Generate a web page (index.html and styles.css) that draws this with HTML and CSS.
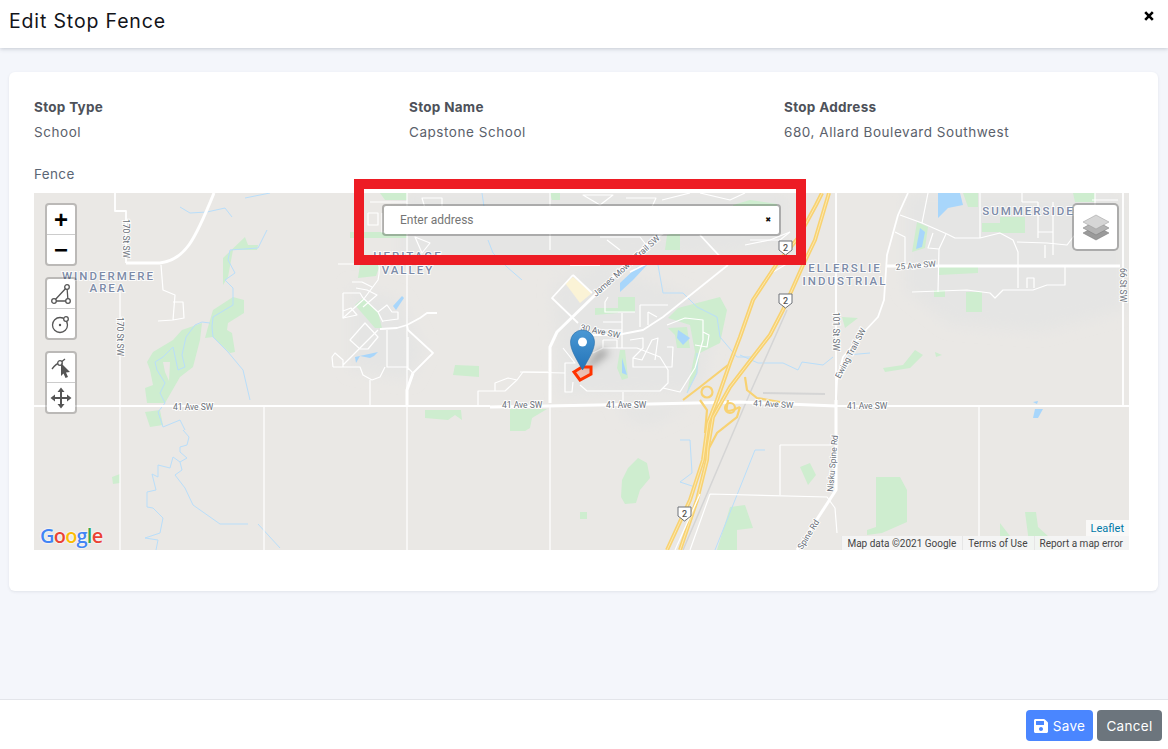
FILE: index.html
```html
<!DOCTYPE html>
<html lang="en">
<head>
<meta charset="utf-8">
<title>Edit Stop Fence</title>
<link rel="stylesheet" href="styles.css">
</head>
<body>
<div class="page">
  <header class="top">
    <h1 class="title">Edit Stop Fence</h1>
    <svg class="close" viewBox="0 0 10 10" width="10" height="10"><path d="M1.200 1.200 8.800 8.800M8.800 1.200 1.200 8.800"/></svg>
  </header>
  <main class="main">
    <section class="card">
      <div class="facts">
        <div><div class="label">Stop Type</div><div class="value">School</div></div>
        <div><div class="label">Stop Name</div><div class="value">Capstone School</div></div>
        <div><div class="label">Stop Address</div><div class="value">680, Allard Boulevard Southwest</div></div>
      </div>
      <div class="fence">Fence</div>
      <div class="map">
        <svg class="tiles" viewBox="34 193 1095 357" width="1095" height="357" xmlns="http://www.w3.org/2000/svg">
          <defs>
            <filter id="soft" x="-10%" y="-10%" width="120%" height="120%"><feGaussianBlur stdDeviation="7"/></filter>
            <filter id="softer" x="-50%" y="-50%" width="200%" height="200%"><feGaussianBlur stdDeviation="4"/></filter>
            <linearGradient id="pin" x1="0" y1="0" x2="0" y2="1"><stop offset="0" stop-color="#4a98d4"/><stop offset="1" stop-color="#2474b8"/></linearGradient>
            <path id="h1" d="M822 193 L816 205 798 238 776 265 753 300 740 337 730 363 717 400 708 423 703 460 690 500 667 550"/>
            <path id="h2" d="M829 193 L815 240 803 265 783 310 770 335 753 357 730 387 713 417 708 447 707 460 697 500 680 550"/>
          </defs>
          <rect class="land" x="34" y="193" width="1095" height="357"/>
          <!-- built-up areas -->
          <g filter="url(#soft)">
            <path class="urban" d="M552 285 L600 262 L700 300 L712 340 L700 392 L560 396 Z"/>
            <path class="urban" d="M400 193 H790 V250 L600 262 H400 Z"/>
            <path class="urban" d="M905 193 H1125 V310 L1040 332 L950 325 L905 290 Z"/>
            <path class="urban" d="M350 285 L400 300 L425 350 L410 380 L350 370 Z"/>
            <path class="urban" d="M615 405 H690 L655 424 H635 Z"/>
          </g>
          <!-- parks -->
          <path class="park" d="M147 362 153 352 173 340 182 330 202 323 200 340 193 367 180 377 165 403 147 403 145 388 153 385 150 370Z"/>
          <path class="land" d="M163 362 170 362 169 381 165 372Z"/>
          <path class="park" d="M213 310 233 297 244 300 244 313 228 323 227 330 232 333 235 352 230 353 213 337 205 338 208 327Z"/>
          <path class="park" d="M223 258 245 237 248 245 258 245 257 250 233 250 228 277 223 285Z"/>
          <path class="park" d="M145 412 160 410 163 425 150 427Z"/>
          <path class="park" d="M112 477 120 474 120 483 113 484Z"/>
          <path class="park" d="M355 305 363 298 378 312 382 328 375 328Z"/>
          <path class="park" d="M360 265 380 265 376 276 358 278Z"/>
          <path class="park" d="M453 375 455 365 479 366 479 377Z"/>
          <path class="park" d="M425 410 461 410 462 420 455 415 448 420 425 418Z"/>
          <path class="park" d="M510 409 547 409 532 418 530 428 525 431 510 431Z"/>
          <path class="park" d="M638 458 647 463 650 478 640 490 636 503 625 504 621 497 622 480 628 468Z"/>
          <rect class="park" x="580" y="512" width="7" height="7"/>
          <path class="park" d="M618 297 635 297 635 312 618 312Z"/>
          <path class="park" d="M595 308 618 308 618 313 595 315Z"/>
          <path class="park" d="M620 350 625 350 628 378 622 380 617 368Z"/>
          <path class="park" d="M678 308 720 297 727 310 720 343 700 353 697 372 687 393 695 352 690 325 668 318Z"/>
          <path class="park" d="M668 328 687 327 690 348 677 348 675 335Z"/>
          <path class="park" d="M842 317 858 318 845 328Z"/>
          <path class="park" d="M883 368 903 365 915 350 923 355 910 368 885 372Z"/>
          <path class="park" d="M935 352 942 355 936 357Z"/>
          <path class="park" d="M876 477 900 477 907 490 907 522 882 533 867 535 867 530 876 527Z"/>
          <path class="park" d="M730 507 745 505 753 528 737 530 737 550 717 550 727 517Z"/>
          <path class="park" d="M800 467 810 463 816 475 808 485Z"/>
          <path class="park" d="M1025 512 1036 512 1038 527 1049 537 1060 550 1030 550Z"/>
          <path class="park" d="M1000 523 1010 536 1012 550 1000 550Z"/>
          <path class="park" d="M917 222 928 227 925 248 912 252Z"/>
          <path class="park" d="M963 193 H978 V207 H968Z"/>
          <path class="park" d="M1000 217 H1025 V233 H1000Z"/>
          <path class="park" d="M982 223 H1000 V232 H982Z"/>
          <path class="park" d="M1073 193 H1095 V202 H1075Z"/>
          <path class="park" d="M939 267 H978 V273 L939 275Z"/>
          <path class="park" d="M934 290 H945 V297 H934Z"/>
          <path class="park" d="M966 292 H982 V312 H966Z"/>
          <path class="park" d="M380 193 H407 V200 H385Z"/>
          <path class="park" d="M350 232 H407 V238 H350Z"/>
          <path class="park" d="M733 205 L750 200 777 204 775 212 735 214Z"/>
          <path class="park" d="M667 235 680 232 680 250 665 250Z"/>
          <path class="park" d="M550 193 H560 V200 H552Z"/>
          <path class="school" d="M565 283 573 277 592 293 580 303Z"/>
          <!-- water -->
          <path class="lake" d="M938 193 H960 L963 205 948 208 938 218Z"/>
          <path class="lake" d="M920 228 925 232 922 247 916 249Z"/>
          <path class="lake" d="M393 306 402 296 404 298 396 310Z"/>
          <path class="lake" d="M355 357 378 352 374 356 370 358 360 356 356 363Z"/>
          <path class="lake" d="M622 358 627 375 622 373Z"/>
          <path class="lake" d="M678 330 690 338 683 345 677 338Z"/>
          <path class="lake" d="M620 283 637 267 647 265 633 280 620 292Z"/>
          <path class="lake" d="M1035 409 1043 409 1038 418 1033 418Z"/>
          <path class="lake" d="M1033 402 1038 401 1037 404Z"/>
          <path class="river" d="M183 430 189 437 187 445 180 447 180 452 187 458 180 462 173 457 170 468 158 465 158 477 152 474 156 490 147 492 147 507 153 508 163 518 160 533 145 538 158 540 156 550"/>
          <path class="river" d="M180 462 182 470 175 475 185 488 193 505 220 524 248 524"/>
          <path class="river" d="M258 524 280 548"/>
          <path class="river" d="M210 323 202 322 195 325 186 337 182 355 185 367 178 370 173 347 163 357 155 362 157 370 165 383 160 393 165 403 158 412 163 427 180 420 185 430"/>
          <path class="river" d="M267 230 258 248 230 250 228 260 235 273 225 280 233 288 233 305 213 317 212 327 213 337 228 352 243 370 250 400"/>
          <path class="river" d="M180 207 190 213 207 212 225 208 232 217 M245 198 270 193"/>
          <path class="river" d="M488 240 493 253 507 267 522 280"/>
          <path class="river" d="M658 265 663 293 683 293 697 307 717 317 720 337 737 357 753 357"/>
          <path class="river" d="M687 393 697 373 697 353"/>
          <path class="river" d="M740 355 758 363 783 363 798 370 802 362 823 365 833 357 M847 355 870 353"/>
          <path class="river" d="M680 440 690 440 692 473 680 482 695 487"/>
          <path class="river" d="M765 450 H755 L715 550"/>
          <path class="river" d="M482 193 486 220"/>
          <!-- grey rail -->
          <path class="rail" d="M787 310 750 393 683 550"/>
          <path class="rail wide" d="M763 393 825 394"/>
          <!-- rural roads -->
          <path class="rd" d="M115 193 V211 H126 V263"/>
          <path class="rd thin" d="M120 290 V550"/>
          <path class="rd thick" d="M126 263 H160 C185 260 195 240 214 193"/>
          <path class="rd thin" d="M161 265 163 290 175 295 173 320 158 321 M173 302 183 302 184 318 173 320"/>
          <path class="rd thin" d="M264 406 V550"/>
          <path class="rd thin" d="M407 193 V550"/>
          <path class="rd thin" d="M550 405 V550"/>
          <!-- Heritage Valley -->
          <path class="rd thin" d="M338 264 H354 M377 255 C380 265 380 272 378 280 L363 300 343 318 M352 282 H362 L372 287 M356 288 L367 290 377 295 363 307"/>
          <path class="rd thin" d="M343 293 H360 L363 298 M343 293 V318 L357 315 351 308 343 311"/>
          <path class="rd thin" d="M378 312 387 305 392 312 398 312 398 319 383 321"/>
          <path class="rd thin" d="M363 298 378 312 383 322"/>
          <path class="rd" d="M380 329 397 328 407 325 420 318 427 313 437 313"/>
          <path class="rd" d="M407 325 408 330 433 353 413 373"/>
          <path class="rd thick" d="M413 373 407 390 407 405"/>
          <path class="rd thin" d="M408 337 V370 M387 330 V367 H407 L413 373"/>
          <path class="rd thin" d="M333 367 H360 L363 375 372 380 380 377 385 367 M333 367 332 357 335 353 343 360 343 367 M343 365 378 330"/>
          <path class="rd thin" d="M350 340 365 323 378 337 368 349 360 349Z M370 380 V405"/>
          <path class="rd thin" d="M478 405 V391 H505 L517 380 523 372 H548 M495 391 V383 L508 378 517 380"/>
          <!-- Allard -->
          <path class="rd thick" d="M550 403 V347 L557 332 593 297 623 267 652 240 690 215"/>
          <path class="rd" d="M573 275 552 298 578 323 M573 275 592 293"/>
          <path class="rd" d="M728 265 663 317 643 330 617 335 590 335"/>
          <path class="rd thin" d="M593 353 603 348 H637 L660 357 668 370 668 383 660 391 H587 L580 385 M623 392 V403"/>
          <path class="rd thin" d="M622 313 V348 M608 297 605 302 V312 H635 M603 322 H622 M603 330 H622 M603 340 V348 M603 340 H617 V348"/>
          <path class="rd thin" d="M640 305 H668 M640 305 V327 M648 312 657 317 M648 312 V325"/>
          <path class="rd thin" d="M630 340 643 338 643 348 633 358 642 360 652 340 658 338 655 360 M633 358 V367 H660 M667 347 H673 L672 367 H660"/>
          <path class="rd thin" d="M667 325 685 318 703 320 V340 L695 368 680 392 663 388 M703 332 709 335 707 347 695 345"/>
          <path class="rd thin" d="M563 348 575 363 H565 V392 H572 L573 382 M520 372 565 373"/>
          <!-- top streets beneath the search box -->
          <path class="rd thin" d="M370 202 H407 M368 213 H378 V225 H368 V213 M382 213 V232 H407 M422 198 H442 V208 H425 Z M415 237 430 243 422 253Z"/>
          <path class="rd thin" d="M550 193 V250 M583 195 H613 L600 205 Z M626 198 H656 L645 222 M600 237 H640 L650 250 M607 240 L620 250 M662 200 L690 193 M700 193 730 200 745 193 M750 240 H780 L790 232"/>
          <path class="rd thin" d="M745 245 L770 240 790 232 M768 275 790 262"/>
          <path class="rd" d="M700 235 L725 262 M630 272 650 262 M570 265 H600 M520 258 H545"/>
          <!-- east side -->
          <path class="rd" d="M836 193 V400"/>
          <path class="rd thick" d="M836 400 V490 L797 550"/>
          <path class="rd" d="M908 193 898 215 887 255 884 300 878 317 863 333 843 357 837 380 836 400"/>
          <path class="rd thin" d="M900 215 922 223 947 234 955 238 H980 L1000 233 1013 240 1018 252 V288"/>
          <path class="rd thin" d="M895 232 905 237 V263 M928 193 922 223 M933 233 928 248 939 249 946 234 M939 249 938 292"/>
          <path class="rd thick" d="M887 266 H1120"/>
          <path class="rd thin" d="M980 193 V238 M1017 242 1047 243 1067 245 1077 232 M1038 202 V238 M1053 202 V255 M1038 232 H1053 M1045 245 V258 M1022 202 H1038 M1022 193 V202"/>
          <path class="rd thin" d="M912 292 967 290 990 293 995 298 1003 290 H1033 L1047 285 H1065 V265 M1027 288 V278 H1034 V288 M1092 200 H1118 M1095 193 V210"/>
          <path class="rd" d="M1123 193 V405"/>
          <path class="rd thin" d="M979 407 V550"/>
          <path class="rd thin" d="M780 445 H832 M780 445 V495 M710 494 827 497 835 508 837 533 M710 494 690 550"/>
          <!-- 41 Ave -->
          <path class="rd" d="M34 406 H490"/>
          <path class="rd thick" d="M490 407 L650 404 L740 402 L836 406"/>
          <path class="rd" d="M836 406 H1129"/>
          <!-- highway -->
          <g class="hw">
            <use href="#h1"/><use href="#h2"/>
            <path class="ramp" d="M728 365 700 387 683 400"/>
            <path class="ramp" d="M745 377 747 390 757 398 780 402"/>
            <path class="ramp" d="M740 407 737 417 717 433 708 450"/>
            <path class="ramp" d="M700 400 707 410 705 433"/>
            <path class="ramp" d="M728 400 C727 410 722 415 740 407"/>
            <circle class="ramp" cx="707" cy="392" r="5.500"/><circle class="ramp" cx="730" cy="408" r="5"/>
          </g>
          <g class="hw-lane"><use href="#h1"/><use href="#h2"/></g>
          <path class="rd thin" d="M700 494 675 550"/>
          <!-- labels -->
          <g class="area">
            <text x="108.500" y="280">WINDERMERE</text><text x="108" y="292">AREA</text>
            <text x="408" y="260">HERITAGE</text><text x="408" y="274">VALLEY</text>
            <text x="845" y="272">ELLERSLIE</text><text x="845" y="285">INDUSTRIAL</text>
            <text x="1028.500" y="215">SUMMERSIDE</text>
          </g>
          <g class="road">
            <text transform="translate(123 219) rotate(90)">170 St SW</text>
            <text transform="translate(117 317) rotate(90)">170 St SW</text>
            <text x="173" y="410">41 Ave SW</text>
            <text x="502" y="408">41 Ave SW</text>
            <text x="606" y="408">41 Ave SW</text>
            <text transform="translate(753 406) rotate(3)">41 Ave SW</text>
            <text x="847" y="409">41 Ave SW</text>
            <text transform="translate(596 297) rotate(-42)">James Mowat Trail SW</text>
            <text transform="translate(580 330) rotate(12)">30 Ave SW</text>
            <text transform="translate(896 270) rotate(-5)">25 Ave SW</text>
            <text transform="translate(1120 268) rotate(90)">66 St SW</text>
            <text transform="translate(833 312) rotate(90)">101 St SW</text>
            <text transform="translate(840 379) rotate(-62)">Ewing Trail SW</text>
            <text transform="translate(833 492) rotate(-85)">Nisku Spine Rd</text>
            <text transform="translate(802 550) rotate(-58)">Spine Rd</text>
          </g>
          <g class="shield"><path d="M779 241 H792 V250 L785.500 255 L779 250Z"/><text x="785.500" y="251">2</text></g>
          <g class="shield"><path d="M779 294 H792 V303 L785.500 308 L779 303Z"/><text x="785.500" y="304">2</text></g>
          <g class="shield"><path d="M678 507 H691 V516 L684.500 521 L678 516Z"/><text x="684.500" y="517">2</text></g>
          <!-- marker and fence -->
          <path d="M583 369 600 349 610 352 592 366Z" fill="#000" fill-opacity=".35" filter="url(#softer)"/>
          <path class="fenceline" d="M574 372 582 367 591 367 591 374 580 380Z"/>
          <path d="M582.500 370 C576 358 570.500 350 570.500 342 A12 12 0 0 1 594.500 342 C594.500 350 589 358 582.500 370Z" fill="url(#pin)" stroke="#2a6ea8" stroke-width=".6"/>
          <circle cx="582.500" cy="342" r="4.500" fill="#fff"/>
        </svg>

        <div class="logo"><span class="g-b">G</span><span class="g-r">o</span><span class="g-y">o</span><span class="g-b">g</span><span class="g-g">l</span><span class="g-r">e</span></div>

        <div class="controls">
          <div class="bar">
            <a class="btn zoom">+</a>
            <a class="btn zoom">−</a>
          </div>
          <div class="bar">
            <a class="btn"><svg viewBox="0 0 24 24" width="24" height="24"><path class="tool" d="M5 19 18 5M5 19H19L18 5"/><circle class="tool hole" cx="5" cy="19" r="2.300"/><circle class="tool hole" cx="19" cy="19" r="2.300"/><circle class="tool hole" cx="18" cy="5" r="2.300"/></svg></a>
            <a class="btn"><svg viewBox="0 0 24 24" width="24" height="24"><circle class="tool" cx="11" cy="13" r="7.500"/><circle cx="11" cy="13" r="1.200" fill="#555"/><circle class="tool hole" cx="17" cy="7" r="2.300"/></svg></a>
          </div>
          <div class="bar">
            <a class="btn"><svg viewBox="0 0 24 24" width="24" height="24"><path class="tool" d="M3 13 C6 9 9 7 11 7 L16 3"/><circle class="tool hole" cx="11" cy="7" r="2.300"/><path d="M12 7 L21 16 17 16.500 19 21 16.500 22 14.500 17.500 12 20Z" fill="#555"/></svg></a>
            <a class="btn"><svg viewBox="0 0 24 24" width="24" height="24"><path class="move" d="M12 3V21M3 12H21"/><path d="M12 1.500 15.500 6H8.500ZM12 22.500 8.500 18H15.500ZM1.500 12 6 8.500V15.500ZM22.500 12 18 15.500V8.500Z" fill="#555"/></svg></a>
          </div>
        </div>

        <div class="layers"><svg viewBox="0 0 30 30" width="30" height="30"><path d="M15 14 28 21 15 28 2 21Z" fill="#9a9a9a" stroke="#777" stroke-width=".5"/><path d="M15 9 28 16 15 23 2 16Z" fill="#b4b4b4" stroke="#777" stroke-width=".5"/><path d="M15 3 28 10 15 17 2 10Z" fill="#d6d6d6" stroke="#999" stroke-width=".5"/></svg></div>

        <div class="leaflet">Leaflet</div>
        <div class="attrib"><span>Map data ©2021 Google</span><span>Terms of Use</span><span>Report a map error</span></div>

        <div class="callout"></div>
        <div class="search"><span class="placeholder">Enter address</span><span class="clear">✖</span></div>
      </div>
    </section>
  </main>
  <footer class="foot">
    <button class="action save"><svg class="disk" viewBox="0 0 448 512" width="14" height="16"><path fill="#fff" d="M433.941 129.941l-83.882-83.882A48 48 0 0 0 316.118 32H48C21.49 32 0 53.49 0 80v352c0 26.51 21.49 48 48 48h352c26.51 0 48-21.49 48-48V163.882a48 48 0 0 0-14.059-33.941zM224 416c-35.346 0-64-28.654-64-64 0-35.346 28.654-64 64-64s64 28.654 64 64c0 35.346-28.654 64-64 64zm96-304.520V212c0 6.627-5.373 12-12 12H76c-6.627 0-12-5.373-12-12V108c0-6.627 5.373-12 12-12h228.520c3.183 0 6.235 1.264 8.485 3.515l3.480 3.480A11.996 11.996 0 0 1 320 111.480z"/></svg>Save</button>
    <button class="action cancel">Cancel</button>
  </footer>
</div>
</body>
</html>
```
FILE: styles.css
```css
* { box-sizing: border-box; }
html, body { margin: 0; height: 100%; }
body { font-family: Inter, "Open Sans", sans-serif; color: #495057; background: #f4f6fb; }
.page { display: flex; flex-direction: column; height: 749px; overflow: hidden; }

.top { height: 48px; background: #fff; box-shadow: 0 1px 4px rgba(60, 70, 90, .25); display: flex; justify-content: space-between; padding: 0 14px 0 9px; position: relative; }
.title { margin: 9px 0 0; font-size: 19.500px; line-height: 24px; font-weight: 400; color: #12141a; letter-spacing: .85px; }
.close { margin-top: 11px; fill: none; stroke: #000; stroke-width: 2.600; }

.main { flex: 1; padding: 24px 10px 0 9px; }
.card { background: #fff; border-radius: 6px; height: 519px; padding: 25px 29px 41px 25px; box-shadow: 0 1px 3px rgba(60, 70, 90, .1); }
.facts { display: grid; grid-template-columns: 375px 375px 1fr; }
.label { font-size: 13.500px; line-height: 21px; font-weight: 700; letter-spacing: .3px; color: #4d5159; }
.value { font-size: 13.500px; line-height: 21px; margin-top: 4px; letter-spacing: .55px; color: #5b616b; }
.fence { font-size: 13.500px; line-height: 21px; margin-top: 21px; margin-bottom: 8px; letter-spacing: .35px; color: #5b6675; }

.map { position: relative; width: 1095px; height: 357px; }
.tiles { display: block; }
.land { fill: #eae8e5; }
.urban { fill: #e5e5e4; }
.park { fill: #ceedcf; }
.school { fill: #fbf3d6; }
.lake { fill: #a8d6fb; }
.river { fill: none; stroke: #b9defa; stroke-width: 1; }
.rail { fill: none; stroke: #d5d5d5; stroke-width: 1.500; }
.rail.wide { stroke-width: 2; }
.rd { fill: none; stroke: #fff; stroke-width: 1.800; stroke-linejoin: round; }
.rd.thin { stroke-width: 1.200; }
.rd.thick { stroke-width: 3; }
.hw use { fill: none; stroke: #f8d272; stroke-width: 4; stroke-linejoin: round; }
.hw .ramp { fill: none; stroke: #f8d272; stroke-width: 2.200; }
.hw-lane use { fill: none; stroke: #fde9ae; stroke-width: 1; }
.area text { font-family: Roboto, sans-serif; font-size: 11.500px; font-weight: 500; letter-spacing: 2px; fill: #7d8ba8; text-anchor: middle; stroke: #fff; stroke-opacity: .85; stroke-width: 2px; paint-order: stroke; }
.road text { font-family: Roboto, sans-serif; font-size: 8.500px; fill: #6a7079; stroke: #fff; stroke-opacity: .9; stroke-width: 2px; paint-order: stroke; }
.shield path { fill: #fff; stroke: #6e7278; stroke-width: 1; }
.shield text { font-family: Roboto, sans-serif; font-size: 9px; font-weight: 500; fill: #555; text-anchor: middle; }
.fenceline { fill: rgba(255, 110, 70, .3); stroke: #ff3300; stroke-width: 3; }

.logo { position: absolute; left: 6px; bottom: 1px; font-family: "Open Sans", Roboto, sans-serif; font-size: 20px; line-height: 26px; font-weight: 600; letter-spacing: -.8px; text-shadow: 0 0 2px #fff, 0 0 2px #fff; }
.g-b { color: #4285f4; }
.g-r { color: #ea4335; }
.g-y { color: #fbbc05; }
.g-g { color: #34a853; }

.controls { position: absolute; left: 11px; top: 10px; display: flex; flex-direction: column; gap: 11px; }
.bar { width: 32px; border: 2px solid rgba(0, 0, 0, .2); border-radius: 4px; background: #fff; background-clip: padding-box; }
.btn { display: flex; align-items: center; justify-content: center; height: 30px; border-bottom: 1px solid #ccc; color: #000; }
.btn:last-child { border-bottom: 0; height: 29px; }
.zoom { font-family: "Liberation Sans", sans-serif; font-size: 24px; font-weight: 700; line-height: 30px; }
.tool { fill: none; stroke: #555; stroke-width: 1.300; }
.tool.hole { fill: #fff; }
.move { fill: none; stroke: #555; stroke-width: 2; }

.layers { position: absolute; right: 10px; top: 10px; width: 47px; height: 48px; border: 2px solid rgba(0, 0, 0, .25); border-radius: 5px; background: #fff; background-clip: padding-box; display: flex; align-items: center; justify-content: center; }

.leaflet { position: absolute; right: 0; bottom: 14px; height: 16px; padding: 0 5px; background: rgba(255, 255, 255, .7); color: #0078a8; font-family: Roboto, sans-serif; font-size: 11px; line-height: 17px; }
.attrib { position: absolute; right: 0; bottom: 0; height: 14px; display: flex; background: rgba(245, 245, 245, .9); font-family: Roboto, sans-serif; font-size: 10px; line-height: 16px; color: #444; }
.attrib span { padding: 0 6px 0 5px; border-left: 1px solid #e6e6e6; }

.callout { position: absolute; left: 320px; top: -14px; width: 452px; height: 86px; border: 10px solid #ed1c24; }
.search { position: absolute; left: 348px; top: 11px; width: 399px; height: 32px; padding: 0 8px 0 16px; border: 2px solid rgba(0, 0, 0, .25); border-radius: 4px; background: #fff; background-clip: padding-box; display: flex; align-items: center; justify-content: space-between; font-family: Roboto, sans-serif; }
.placeholder { font-size: 12px; color: #757575; }
.clear { font-family: "DejaVu Sans", sans-serif; font-size: 7px; color: #111; }

.foot { height: 50px; background: #fff; border-top: 1px solid #e3e5ea; display: flex; justify-content: flex-end; align-items: flex-start; gap: 4px; padding: 10px 6px 0 0; }
.action { height: 31px; border: 0; border-radius: 4px; color: #fff; font-family: Inter, "Open Sans", sans-serif; font-size: 13.500px; letter-spacing: .3px; display: flex; align-items: center; justify-content: center; padding: 0; }
.save { width: 67px; background: #4a86ff; gap: 5px; }
.cancel { width: 65px; background: #6c757d; }
.disk { display: block; }
```
